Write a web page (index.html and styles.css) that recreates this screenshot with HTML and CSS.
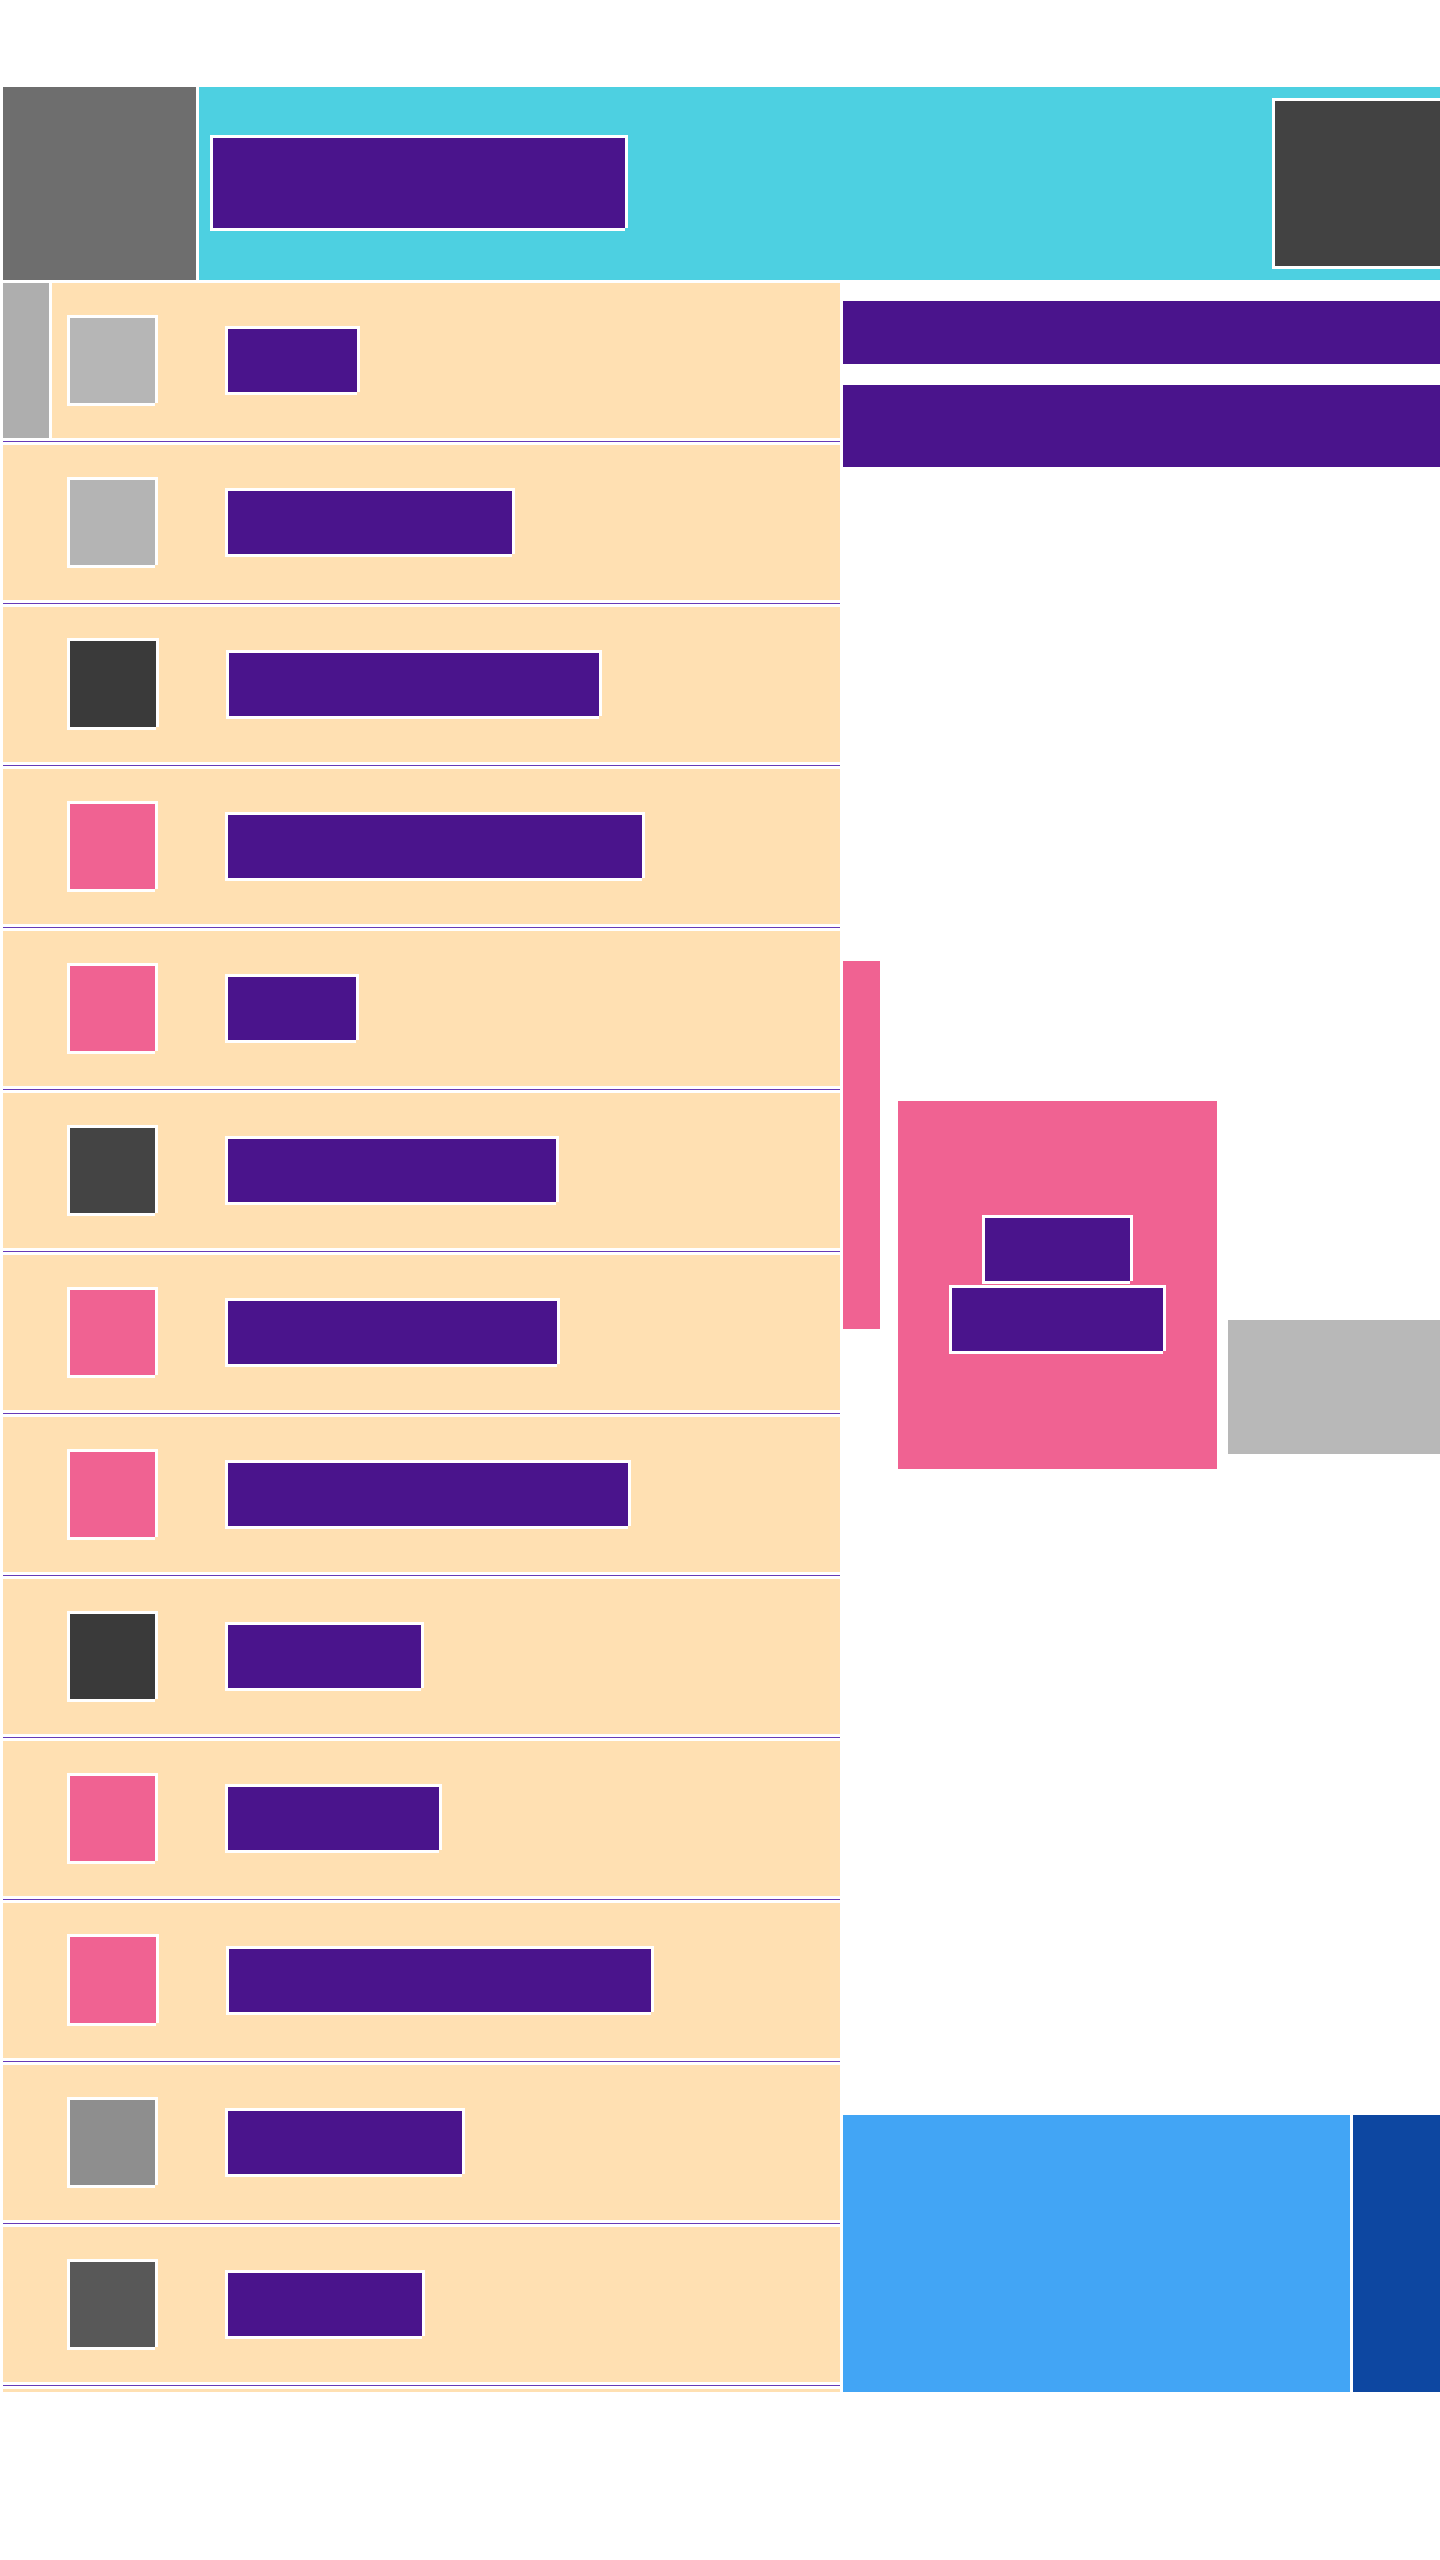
FILE: index.html
```
<!DOCTYPE html>
<html lang="en">
<head>
<meta charset="utf-8">
<title>Layout blocks</title>
<link rel="stylesheet" href="styles.css">
</head>
<body>
<div class="page">
  <header class="topbar">
    <div class="nav-button"></div>
    <div class="toolbar">
      <div class="block title"></div>
      <div class="block action"></div>
    </div>
  </header>
  <div class="body">
    <nav class="menu">
      <div class="row selected"><div class="marker"></div><div class="fill"><div class="block icon g-b6"></div><div class="block label" style="width:129px"></div></div></div>
      <div class="row"><div class="fill"><div class="block icon g-b4"></div><div class="block label" style="width:284px"></div></div></div>
      <div class="row"><div class="fill"><div class="block icon large g-3a"></div><div class="block label" style="width:370px"></div></div></div>
      <div class="row"><div class="fill"><div class="block icon pink"></div><div class="block label" style="width:414px"></div></div></div>
      <div class="row"><div class="fill"><div class="block icon pink"></div><div class="block label" style="width:128px"></div></div></div>
      <div class="row"><div class="fill"><div class="block icon g-44"></div><div class="block label" style="width:328px"></div></div></div>
      <div class="row"><div class="fill"><div class="block icon pink"></div><div class="block label" style="width:329px"></div></div></div>
      <div class="row"><div class="fill"><div class="block icon pink"></div><div class="block label" style="width:400px"></div></div></div>
      <div class="row"><div class="fill"><div class="block icon g-3a"></div><div class="block label" style="width:193px"></div></div></div>
      <div class="row"><div class="fill"><div class="block icon pink"></div><div class="block label" style="width:211px"></div></div></div>
      <div class="row"><div class="fill"><div class="block icon large pink"></div><div class="block label" style="width:422px"></div></div></div>
      <div class="row"><div class="fill"><div class="block icon g-8e"></div><div class="block label" style="width:234px"></div></div></div>
      <div class="row"><div class="fill"><div class="block icon g-58"></div><div class="block label" style="width:194px"></div></div></div>
      <div class="row-tail"></div>
    </nav>
    <main class="content">
      <div class="line line-small"></div>
      <div class="line line-large"></div>
      <div class="cards">
        <div class="side-card"></div>
        <div class="card">
          <div class="block label" style="width:145px"></div>
          <div class="block label" style="width:211px"></div>
        </div>
        <div class="image"></div>
      </div>
      <footer class="bottom">
        <div class="panel"></div>
        <div class="panel-end"></div>
      </footer>
    </main>
  </div>
</div>
</body>
</html>
```
FILE: styles.css
```
body {
  margin: 0;
  background: #fff;
  font-family: Roboto, sans-serif;
}

.page {
  width: 1440px;
  height: 2560px;
  box-sizing: border-box;
  padding: 87px 0 0 3px;
  overflow: hidden;
  display: flex;
  flex-direction: column;
  gap: 3px;
}

/* White outline, open at the bottom right corner */
.block {
  flex: none;
  border: 3px solid #fff;
  clip-path: polygon(0 0, 100% 0, 100% calc(100% - 3px), calc(100% - 3px) calc(100% - 3px), calc(100% - 3px) 100%, 0 100%);
}

.topbar {
  display: flex;
  gap: 3px;
  height: 193px;
}

.nav-button {
  width: 193px;
  background: #6e6e6e;
}

.toolbar {
  flex: 1;
  display: flex;
  align-items: center;
  justify-content: space-between;
  padding-left: 11px;
  background: #4dd0e1;
}

.title {
  width: 412px;
  height: 90px;
  margin-bottom: 1px;
  background: #4a148c;
}

.action {
  width: 165px;
  height: 165px;
  margin-right: -3px;
  background: #424242;
}

.body {
  display: flex;
  gap: 3px;
  height: 2109px;
}

.menu {
  width: 837px;
  display: flex;
  flex-direction: column;
  gap: 3px;
}

.row {
  flex: none;
  display: flex;
  gap: 3px;
  height: 155px;
  padding-bottom: 3px;
  border-bottom: 1px solid #673ab7;
}

.marker {
  width: 46px;
  background: #aeaeae;
}

.fill {
  flex: 1;
  display: flex;
  align-items: flex-start;
  gap: 67px;
  padding-left: 64px;
  background: #ffe0b2;
}

.selected .fill {
  padding-left: 15px;
}

.icon {
  width: 85px;
  height: 85px;
  margin-top: 32px;
}

.icon.large {
  width: 86px;
  height: 86px;
  margin-top: 31px;
}

.label {
  height: 63px;
  background: #4a148c;
}

.fill .label {
  margin-top: 43px;
}

.row-tail {
  height: 3px;
  background: #ffe0b2;
}

.pink { background: #f06292; }
.g-b6 { background: #b6b6b6; }
.g-b4 { background: #b4b4b4; }
.g-3a { background: #3a3a3a; }
.g-44 { background: #444; }
.g-8e { background: #8e8e8e; }
.g-58 { background: #585858; }

.content {
  flex: 1;
  display: flex;
  flex-direction: column;
  padding-top: 18px;
}

.line {
  background: #4a148c;
}

.line-small {
  height: 63px;
}

.line-large {
  height: 82px;
  margin-top: 21px;
}

.cards {
  display: flex;
  align-items: flex-start;
  margin-top: 494px;
}

.side-card {
  width: 37px;
  height: 368px;
  background: #f06292;
}

.card {
  display: flex;
  flex-direction: column;
  align-items: center;
  gap: 1px;
  width: 319px;
  height: 368px;
  box-sizing: border-box;
  margin: 140px 11px 0 18px;
  padding-top: 114px;
  background: #f06292;
}

.image {
  flex: 1;
  height: 134px;
  margin-top: 359px;
  background: #b8b8b8;
}

.bottom {
  display: flex;
  gap: 3px;
  height: 277px;
  margin-top: auto;
}

.panel {
  width: 507px;
  background: #42a5f5;
}

.panel-end {
  flex: 1;
  background: #0d47a1;
}
```
